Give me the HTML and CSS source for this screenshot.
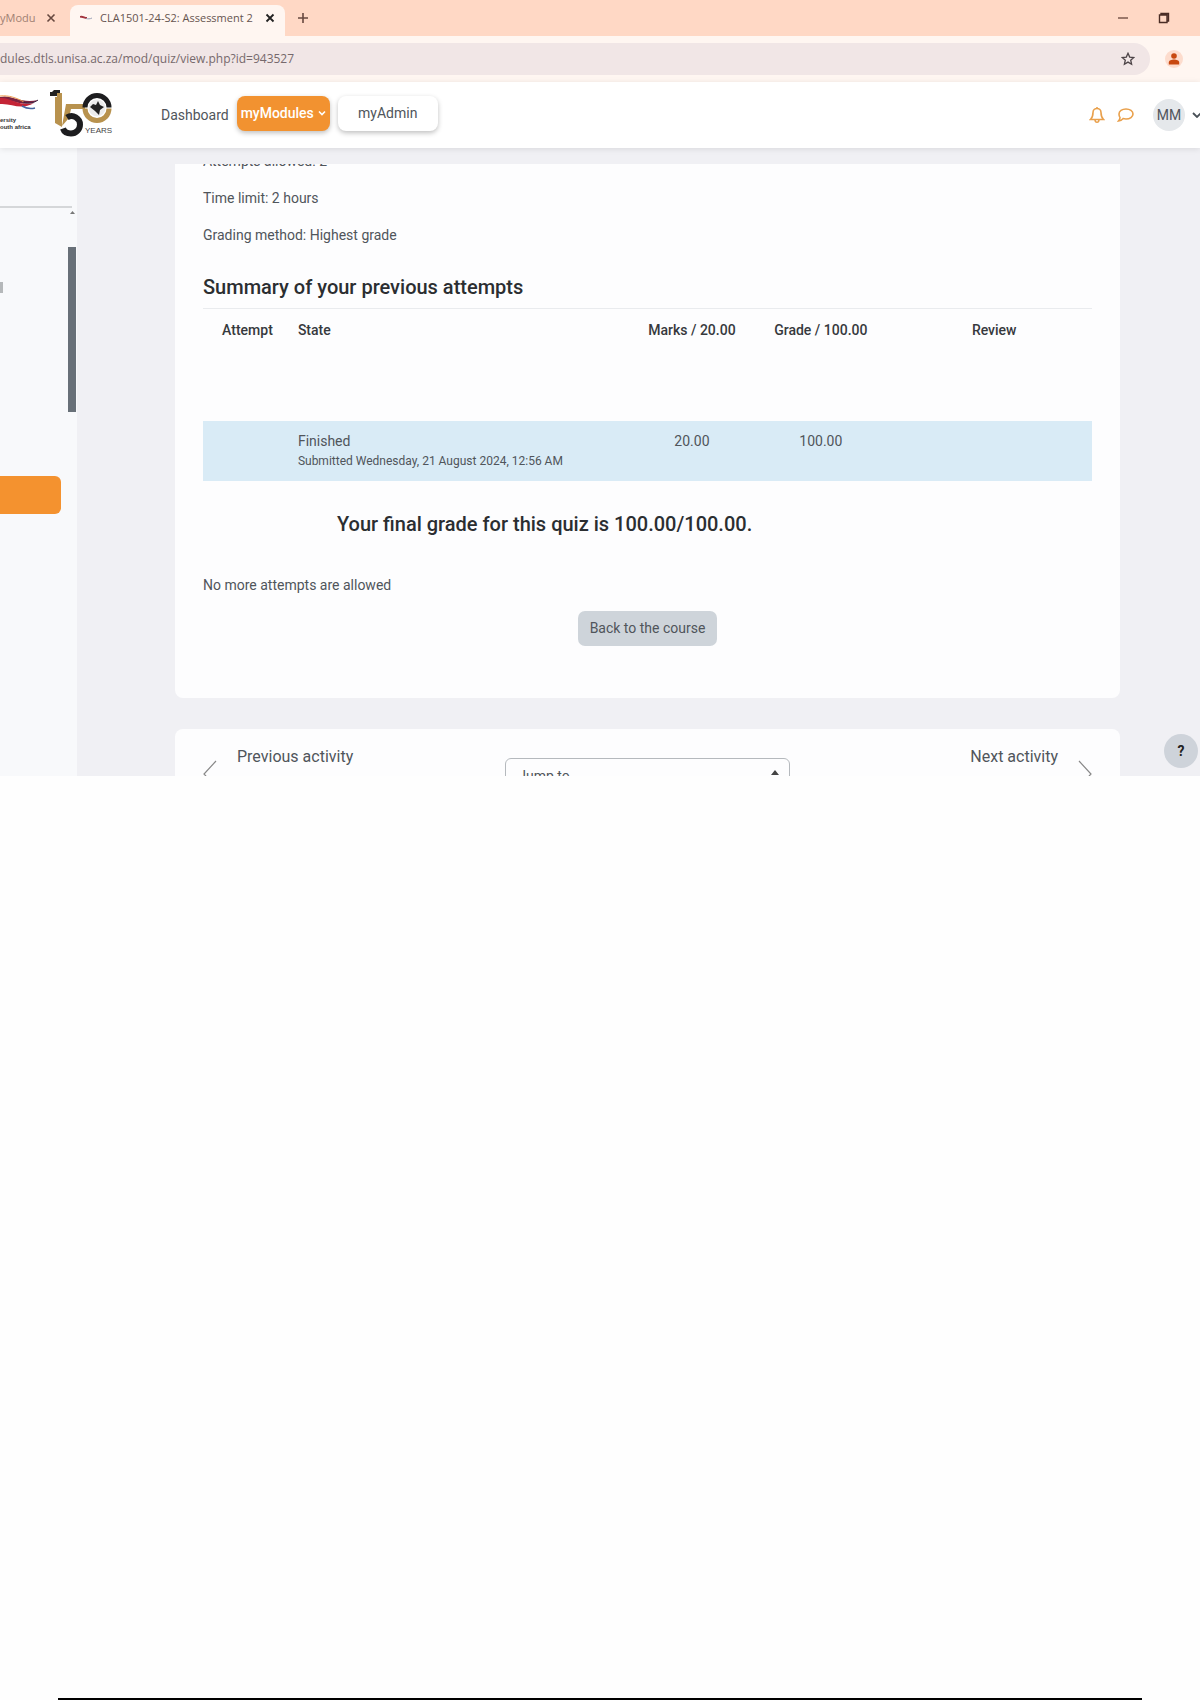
FILE: index.html
```
<!DOCTYPE html>
<html lang="en">
<head>
  <meta charset="UTF-8">
  <meta name="viewport" content="width=device-width, initial-scale=1.0">
  <title>CLA1501-24-S2: Assessment 2</title>
  <link rel="stylesheet" href="styles.css">
</head>
<body>
  <div class="browser">
    <div class="tabs">
      <div class="tab tab-old">
        <span class="tab-title">yModu</span>
        <button class="icon-button" aria-label="Close tab"><svg width="10" height="10" viewBox="0 0 10 10"><path d="M1.5 1.5l7 7M8.5 1.5l-7 7" stroke="#67483f" stroke-width="1.6"/></svg></button>
      </div>
      <div class="tab tab-active">
        <svg width="12" height="6" viewBox="0 0 12 6"><path d="M0 2c3-1 4 1 7 1" fill="none" stroke="#a3343e" stroke-width="1.800"/><path d="M6 3.500c2 .6 4 .5 6-.5" fill="none" stroke="#9aa0b5"/></svg>
        <span class="tab-title">CLA1501-24-S2: Assessment 2</span>
        <button class="icon-button" aria-label="Close tab"><svg width="10" height="10" viewBox="0 0 10 10"><path d="M1.5 1.5l7 7M8.5 1.5l-7 7" stroke="#222" stroke-width="1.8"/></svg></button>
      </div>
      <button class="icon-button new-tab" aria-label="New tab"><svg width="12" height="12" viewBox="0 0 12 12"><path d="M6 1v10M1 6h10" stroke="#67483f" stroke-width="1.6"/></svg></button>
      <div class="window-buttons">
        <button class="icon-button" aria-label="Minimise"><svg width="12" height="12" viewBox="0 0 12 12"><path d="M1 6h10" stroke="#5b3a30" stroke-width="1.2"/></svg></button>
        <button class="icon-button" aria-label="Restore"><svg width="12" height="12" viewBox="0 0 12 12"><path d="M1.5 3h7.5v7.5h-7.5zM3 3V1.5h7.5V9H9" fill="none" stroke="#4a2c25" stroke-width="1.4"/></svg></button>
      </div>
    </div>
    <div class="toolbar">
      <div class="address">
        <input class="address-input" type="text" aria-label="Address" value="dules.dtls.unisa.ac.za/mod/quiz/view.php?id=943527">
        <button class="icon-button" aria-label="Bookmark this page"><svg width="14" height="14" viewBox="0 0 14 14"><path d="M7 1.3l1.7 3.8 4.1.4-3.1 2.7.9 4L7 10.1l-3.6 2.1.9-4L1.2 5.500l4.1-.4z" fill="none" stroke="#4d4447" stroke-width="1.3"/></svg></button>
      </div>
      <button class="icon-button profile" aria-label="Profile"><svg width="18" height="18" viewBox="0 0 18 18"><circle cx="9" cy="9" r="9" fill="#fddccd"/><circle cx="9" cy="6" r="2.800" fill="#c8480f"/><path d="M3.8 14.500v-2c0-2 3-2.900 5.200-2.900s5.200.9 5.200 2.900v2z" fill="#c8480f"/></svg></button>
    </div>
  </div>

  <header class="nav">
    <svg width="39" height="50" viewBox="0 0 39 50">
      <path d="M0 7c12-3 20 7 38 3-13 9-23-1-38 0z" fill="#7d2440"/>
      <path d="M0 8c11-1 18 9 34 5-14 8-22 0-34 1z" fill="#c42436"/>
      <path d="M0 6c9-1 17 2 24 6" fill="none" stroke="#f0a052"/>
      <path d="M22 16c5 3 9 3 13 2" fill="none" stroke="#4866a0" stroke-width="1.5"/>
      <path d="M23 12c6 2 11 1 15-2" fill="none" stroke="#3b2242"/>
      <text x="0" y="32" class="logo-text">ersity</text>
      <text x="0" y="39" class="logo-text">outh africa</text>
    </svg>
    <svg class="logo-150" width="64" height="50" viewBox="0 0 64 50">
      <path d="M0 6V2h2l2-2h6v6z" fill="#222"/>
      <path d="M5 7h2V3h5v34l-7-4z" fill="#b8924e"/>
      <path d="M12 36l4-22h19v5H21l-2 9z" fill="#b8924e"/>
      <path d="M17 27.500c6-4 13 1 13 7 0 5-4 9-9 9-4 0-7-2-8-5" fill="none" stroke="#1d1d1f" stroke-width="6"/>
      <path d="M35 17.500a12 12 0 0 1 24 0" fill="none" stroke="#1d1d1f" stroke-width="5"/>
      <path d="M35 18.500a12 12 0 0 0 24 0" fill="none" stroke="#b8924e" stroke-width="5"/>
      <circle cx="47" cy="18" r="8.500" fill="#ececec"/>
      <path d="M40 17l3-3 3 1 2-4 2 4 4 2-4 3-1 5-4-4z" fill="#222"/>
      <text x="35" y="43" class="years-text">YEARS</text>
    </svg>
    <nav class="nav-links">
      <a class="nav-link" href="#">Dashboard</a>
      <a class="nav-button nav-button-active" href="#">myModules <svg width="8" height="6" viewBox="0 0 8 6"><path d="M1 1.5l3 3 3-3" fill="none" stroke="#fff" stroke-width="1.6"/></svg></a>
      <a class="nav-button" href="#">myAdmin</a>
    </nav>
    <div class="user-menu">
      <button class="icon-button" aria-label="Notifications"><svg width="16" height="18" viewBox="0 0 16 18"><path d="M1.500 13.500h13c-2-2-2.500-4-2.500-7a4 4 0 0 0-8 0c0 3-.5 5-2.500 7zM6 14c.3 3 3.700 3 4 0M8 2.500V1" fill="none" stroke="#e9a04c" stroke-width="1.6"/></svg></button>
      <button class="icon-button" aria-label="Messages"><svg width="18" height="16" viewBox="0 0 18 16"><path d="M9 2c4 0 7 2.200 7 5s-3 5-7 5c-1 0-2-.1-3-.4C5 13 3.500 14 1.500 14c1-1 1.500-2 1.500-3.500C2 9.500 2 8.300 2 7c0-2.800 3-5 7-5z" fill="none" stroke="#e9a04c" stroke-width="1.6"/></svg></button>
      <button class="avatar" aria-label="User menu"><span class="initials">MM</span><svg width="8" height="6" viewBox="0 0 8 6"><path d="M1 1l4 4 4-4" fill="none" stroke="#495057" stroke-width="1.8"/></svg></button>
    </div>
  </header>

  <div class="page">
    <aside class="sidebar">
      <div class="sidebar-head"></div>
      <div class="sidebar-body">
        <div class="sidebar-content">
          <span class="sidebar-mark"></span>
          <button class="sidebar-button" aria-label="Open"></button>
        </div>
        <div class="scrollbar">
          <svg width="5" height="3" viewBox="0 0 5 3"><path d="M0 3l2.500-3L5 3z" fill="#777"/></svg>
          <div class="scroll-thumb"></div>
        </div>
      </div>
    </aside>

    <main class="main">
      <section class="card quiz">
        <p class="quiz-cut">Attempts allowed: 2</p>
        <p class="quiz-info">Time limit: 2 hours</p>
        <p class="quiz-info">Grading method: Highest grade</p>
        <h2 class="heading summary">Summary of your previous attempts</h2>
        <table class="attempts">
          <thead>
            <tr>
              <th class="col-attempt">Attempt</th>
              <th class="col-state">State</th>
              <th class="col-marks">Marks / 20.00</th>
              <th class="col-grade">Grade / 100.00</th>
              <th class="col-review">Review</th>
            </tr>
          </thead>
          <tbody>
            <tr class="spacer"><td colspan="5"></td></tr>
            <tr class="result">
              <td></td>
              <td class="col-state">Finished<span class="submitted">Submitted Wednesday, 21 August 2024, 12:56 AM</span></td>
              <td>20.00</td>
              <td>100.00</td>
              <td></td>
            </tr>
          </tbody>
        </table>
        <h2 class="heading final-grade">Your final grade for this quiz is 100.00/100.00.</h2>
        <p class="no-more">No more attempts are allowed</p>
        <button class="back-button">Back to the course</button>
      </section>

      <!-- activity navigation, cut off by the window edge -->
      <section class="card activity-nav">
        <a class="activity-link" href="#"><svg width="14" height="28" viewBox="0 0 14 28"><path d="M13 1L1 14l12 13" fill="none" stroke="#888" stroke-width="1.2"/></svg><span>Previous activity</span></a>
        <select class="jump" aria-label="Jump to">
          <option>Jump to...</option>
        </select>
        <a class="activity-link activity-next" href="#"><span>Next activity</span><svg width="14" height="28" viewBox="0 0 14 28"><path d="M1 1l12 13L1 27" fill="none" stroke="#888" stroke-width="1.2"/></svg></a>
      </section>
    </main>
    <button class="help" aria-label="Help">?</button>
  </div>

  <footer class="page-end"></footer>
</body>
</html>
```
FILE: styles.css
```
* {
  box-sizing: border-box;
}
body {
  margin: 0;
  min-height: 100vh;
  display: flex;
  flex-direction: column;
  font-family: Roboto, "Liberation Sans", sans-serif;
  font-size: 14px;
  line-height: 20px;
  color: #50555b;
  background: #fefefe;
}
p, h2 {
  margin: 0;
}
a {
  color: inherit;
  text-decoration: none;
}
button, input, select {
  font: inherit;
  color: inherit;
  border: none;
}
svg {
  display: block;
  flex: none;
}
.icon-button {
  display: flex;
  padding: 0;
  background: none;
}

/* browser window */
.browser {
  font-family: "Open Sans", "Noto Sans", sans-serif;
  background: #fff6f1;
}
.tabs {
  display: flex;
  align-items: center;
  height: 36px;
  background: #ffd8c5;
}
.tab {
  display: flex;
  align-items: center;
  font-size: 11px;
}
.tab-old {
  width: 70px;
  gap: 10px;
  color: #a08073;
}
.tab-title {
  white-space: nowrap;
}
.tab-old .tab-title {
  width: 36px;
}
.tab-active {
  align-self: flex-end;
  height: 31px;
  width: 215px;
  padding: 0 10px 5px;
  gap: 8px;
  color: #66544f;
  background: #fff6f1;
  border-radius: 8px 8px 0 0;
}
.tab-active .tab-title {
  flex: 1;
}
.new-tab {
  margin-left: 12px;
}
.window-buttons {
  display: flex;
  gap: 29px;
  margin-left: auto;
  padding-right: 30px;
}
.toolbar {
  display: flex;
  align-items: center;
  gap: 15px;
  height: 46px;
  padding-right: 17px;
}
.address {
  flex: 1;
  display: flex;
  align-items: center;
  height: 32px;
  padding-right: 15px;
  background: #f1e6e6;
  border-radius: 0 16px 16px 0;
}
.address-input {
  flex: 1;
  padding: 0;
  font-size: 12px;
  color: #76696c;
  background: none;
}

/* site header */
.nav {
  display: flex;
  align-items: center;
  height: 66px;
  background: #fff;
  box-shadow: 0 1px 6px rgba(0, 0, 0, 0.1);
  z-index: 1;
}
.logo-150 {
  margin-left: 11px;
}
.logo-text {
  font: bold 6px "Liberation Sans", sans-serif;
  fill: #333;
}
.years-text {
  font: 8px "Liberation Sans", sans-serif;
  fill: #444;
}
.nav-links {
  display: flex;
  align-items: center;
  gap: 8px;
  margin-left: 47px;
}
.nav-button {
  display: flex;
  align-items: center;
  justify-content: center;
  gap: 4px;
  height: 35px;
  width: 100px;
  margin-bottom: 4px;
  background: #fff;
  border-radius: 8px;
  box-shadow: 0 2px 5px rgba(0, 0, 0, 0.25);
}
.nav-button-active {
  width: 93px;
  font-weight: 500;
  color: #fff;
  background: #f29230;
}
.user-menu {
  display: flex;
  align-items: center;
  gap: 12px;
  margin-left: auto;
}
.avatar {
  display: flex;
  align-items: center;
  gap: 7px;
  margin-left: 6px;
  padding: 0;
  background: none;
}
.initials {
  width: 32px;
  line-height: 32px;
  border-radius: 50%;
  background: #e5e8eb;
}

/* page */
.page {
  display: flex;
  background: #f0f0f4;
}
.sidebar {
  display: flex;
  flex-direction: column;
  width: 77px;
  background: #f8f9fb;
}
.sidebar-head {
  height: 60px;
  margin-right: 5px;
  border-bottom: 2px solid #d5d7d9;
}
.sidebar-body {
  flex: 1;
  display: flex;
  justify-content: space-between;
}
.sidebar-content {
  width: 61px;
  padding-top: 74px;
}
.sidebar-mark {
  display: block;
  width: 3px;
  height: 11px;
  background: #b5b8ba;
}
.sidebar-button {
  display: block;
  width: 100%;
  height: 38px;
  margin-top: 183px;
  background: #f4922f;
  border-radius: 0 6px 6px 0;
}
.scrollbar {
  display: flex;
  flex-direction: column;
  align-items: center;
  gap: 33px;
  width: 8px;
  margin-right: 1px;
  padding-top: 3px;
}
.scroll-thumb {
  width: 8px;
  height: 165px;
  background: #687078;
}
.main {
  flex: 1;
  display: flex;
  flex-direction: column;
  gap: 31px;
  padding: 16px 0 0 98px;
}
.card {
  background: #fdfdfe;
  border-radius: 8px;
}
.quiz {
  padding: 0 28px 52px;
  border-radius: 0 0 8px 8px;
}
/* line scrolled under the top of the card */
.quiz-cut {
  display: flex;
  align-items: flex-end;
  height: 7px;
  margin-bottom: 17px;
  overflow: hidden;
}
.quiz-info {
  margin-bottom: 17px;
}
.heading {
  font-size: 20px;
  line-height: 28px;
  font-weight: 500;
  color: #2b2e31;
}
.summary {
  margin: 28px 0 7px;
}
.attempts {
  width: 100%;
  table-layout: fixed;
  border-collapse: collapse;
  text-align: center;
}
.attempts thead {
  border-top: 1px solid #e9ebee;
}
.attempts th {
  height: 42px;
  padding: 0 6px;
  font-weight: 500;
  color: #36393d;
}
.attempts td {
  padding: 10px 6px;
  vertical-align: top;
}
.attempts .col-state {
  text-align: left;
}
.col-attempt {
  width: 10%;
}
.col-state {
  width: 39%;
}
.col-marks {
  width: 12%;
}
.col-grade {
  width: 17%;
}
.spacer {
  height: 70px;
}
.result {
  background: #d9ebf6;
}
.submitted {
  display: block;
  font-size: 12px;
}
.final-grade {
  margin: 29px 0 0 134px;
}
.no-more {
  margin: 37px 0 16px;
}
.back-button {
  display: block;
  height: 35px;
  margin: 0 auto;
  padding: 0 12px;
  background: #ced4da;
  border-radius: 7px;
}
.activity-nav {
  display: flex;
  justify-content: space-between;
  height: 47px;
  padding: 18px 28px 0;
  border-radius: 8px 8px 0 0;
  overflow: hidden;
}
.activity-link {
  flex: 1;
  display: flex;
  gap: 20px;
  font-size: 16px;
}
.activity-link svg {
  margin-top: 13px;
}
.activity-next {
  justify-content: flex-end;
}
.jump {
  width: 32%;
  height: 36px;
  margin-top: 11px;
  padding: 0 12px;
  border: 1px solid #b5b9bd;
  border-radius: 6px;
  appearance: none;
  background: url("data:image/svg+xml,%3Csvg xmlns='http://www.w3.org/2000/svg' width='8' height='12'%3E%3Cpath d='M0 5l4-5 4 5zM0 7h8l-4 5z' fill='%23444'/%3E%3C/svg%3E") no-repeat right 10px center;
}
.help {
  align-self: flex-end;
  width: 34px;
  height: 34px;
  margin: 0 2px 8px 44px;
  padding: 0;
  font-weight: bold;
  color: #222;
  background: #ced3da;
  border-radius: 50%;
}

.page-end {
  margin: auto 58px 0;
  border-top: 2px solid #000;
}
```
